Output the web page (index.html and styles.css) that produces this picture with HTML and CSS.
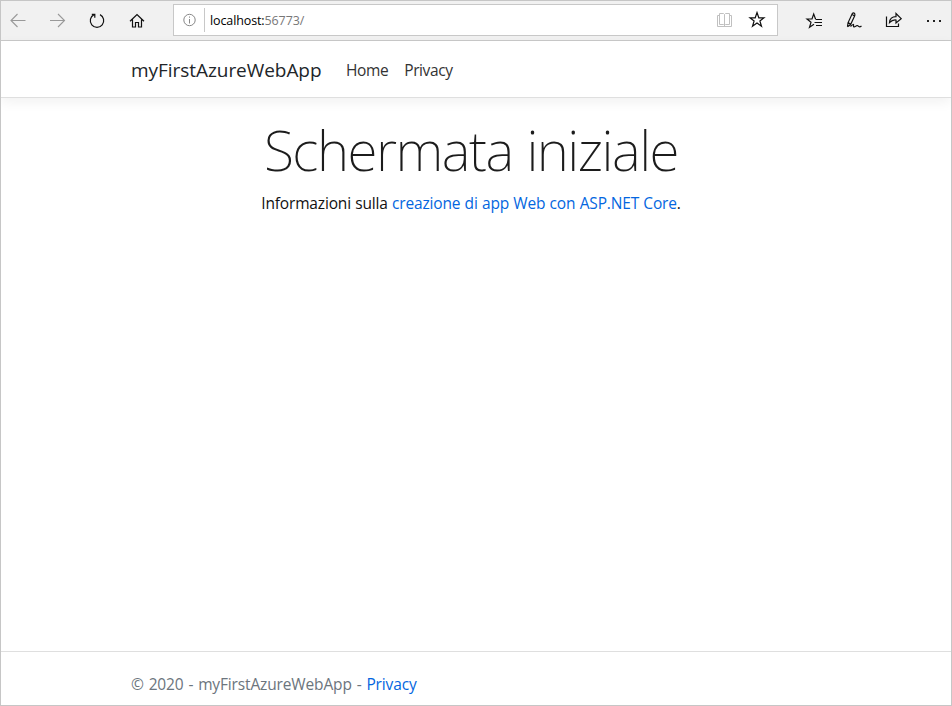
FILE: index.html
```html
<!DOCTYPE html>
<html lang="it">
<head>
<meta charset="utf-8">
<title>Home - myFirstAzureWebApp</title>
<link rel="stylesheet" href="styles.css">
</head>
<body>
<div class="window">
  <div class="toolbar">
    <div class="nav-buttons">
      <svg class="icon dim" viewBox="0 0 20 20"><path d="M18.500 10.500H4M10.500 4L4 10.500L10.500 17"/></svg>
      <svg class="icon dim" viewBox="0 0 20 20"><path d="M3 10.500H17.500M11 4L17.500 10.500L11 17"/></svg>
      <svg class="icon" viewBox="0 0 20 20"><path d="M7 4.600A6.700 6.700 0 1 0 13 4.600M4.800 4.400H7.800V7.800"/></svg>
      <svg class="icon" viewBox="0 0 20 20"><path d="M3 11.300L10 4.500L17 11.300M5.500 9.500V17H8.500V12.500H11.500V17H14.500V9.500"/></svg>
    </div>
    <div class="address">
      <svg class="icon info" viewBox="0 0 20 20"><circle cx="10.500" cy="11" r="5.700"/><path d="M10.500 10V14.500M10.500 7.500V8.700"/></svg>
      <span class="separator"></span>
      <span class="url">localhost:<span class="port">56773/</span></span>
      <svg class="icon book" viewBox="0 0 20 20"><path d="M10.500 5.500V17M10.500 5.500L9.500 4.500H5.500V15.500H9.500L10.500 16.500L11.500 15.500H15.500V4.500H11.500L10.500 5.500M5.500 6.500H3.500V17.500H17.500V6.500H15.500"/></svg>
      <svg class="icon star" viewBox="0 0 20 20"><path d="M10 3.500L11.800 8.800H17L12.900 12L14.500 17.300L10 14.100L5.500 17.300L7.100 12L3 8.800H8.200Z"/></svg>
    </div>
    <div class="actions">
      <svg class="icon" viewBox="0 0 20 20"><path d="M12 8.500H11.300L9.700 4L8 9H3L7 12.300L5.500 17.300L10 14.200"/><path d="M11.500 9.500H18M10.500 12.500H18M12 15.500H18"/></svg>
      <svg class="icon" viewBox="0 0 20 20"><path d="M3.500 16.800L4 12.800L8.200 3.700Q9.500 2 10.700 3.700Q11.200 4.800 10.600 6L6.500 14.800L3.500 16.800M4.300 12.500L6.500 14.500M8 4.500L10.300 5.800"/><path d="M6.500 16.500C9 14 10 14 9.500 15.500C9.200 17.500 11 17 12.500 15.800Q13.500 15 14.200 16.200Q15.500 17.500 17.500 16"/></svg>
      <svg class="icon" viewBox="0 0 20 20"><path d="M2.500 6.500V16.500H14.500V13.500"/><path d="M5.500 12.700Q6 6.700 12 6.700V3.500L17.200 8.600L12 13V10Q8.500 9.500 5.500 12.700Z"/></svg>
      <svg class="icon dots" viewBox="0 0 20 20"><path d="M3 10h2v2H3zM9 10h2v2H9zM15 10h2v2h-2z"/></svg>
    </div>
  </div>
  <header class="navbar">
    <a class="brand">myFirstAzureWebApp</a>
    <nav class="links"><a class="home">Home</a><a class="privacy">Privacy</a></nav>
  </header>
  <main class="content">
    <h1 class="title">Schermata iniziale</h1>
    <p class="lead">Informazioni sulla <a class="link">creazione di app Web con ASP.NET Core</a>.</p>
  </main>
  <footer class="footer"><span class="copyright">© 2020 - myFirstAzureWebApp - <a class="link">Privacy</a></span></footer>
</div>
</body>
</html>
```
FILE: styles.css
```css
* { box-sizing: border-box; }
body { margin: 0; font-family: "Open Sans", "Noto Sans", sans-serif; font-size: 15.5px; color: #212529; }
.window { width: 952px; height: 706px; border: 1px solid #c6c6c6; display: flex; flex-direction: column; background: #fff; overflow: hidden; }
.toolbar { height: 40px; flex: none; background: #f1f1f1; border-bottom: 1px solid #c9c9c9; display: flex; align-items: flex-start; }
.icon { width: 20px; height: 20px; flex: none; fill: none; stroke: #111; stroke-width: 1.2; }
.dim { stroke: #999; stroke-width: 1.1; }
.nav-buttons { display: flex; gap: 20px; width: 172px; padding: 9px 0 0 6px; }
.address { width: 605px; height: 32px; margin-top: 3px; border: 1px solid #c8c8c8; background: #fff; display: flex; align-items: center; padding: 0 10px 0 5px; }
.address .icon { margin-bottom: 2px; }
.info { stroke: #888; stroke-width: 1; }
.separator { width: 1px; height: 24px; background: #c8c8c8; margin: 0 5px; }
.url { font-size: 12.5px; line-height: 20px; padding-top: 2px; color: #000; letter-spacing: -0.11px; flex: 1; }
.port { color: #777; }
.address .book { stroke: #c0c0c0; stroke-width: 1; margin-right: 13px; }
.actions { display: flex; gap: 20px; padding: 9px 0 0 26px; }
.dots { fill: #222; stroke: none; }
.navbar { height: 57px; flex: none; display: flex; align-items: center; padding: 1px 0 0 130px; border-bottom: 1px solid #dfdfdf; box-shadow: 0 4px 12px rgba(0,0,0,.06); }
.brand { width: 215px; font-size: 19px; line-height: 30px; letter-spacing: -0.05px; }
.links { display: flex; gap: 16px; padding-top: 1px; color: #333; line-height: 24px; letter-spacing: -0.4px; }
.content { flex: 1; text-align: center; padding: 18px 10px 0 0; }
.title { margin: 0; font-family: "Noto Sans", "Open Sans", sans-serif; font-size: 55px; font-weight: 200; line-height: 68px; letter-spacing: -1.5px; word-spacing: 1px; color: #1c1c1c; }
.lead { margin: 7px 0 0; line-height: 24px; letter-spacing: -0.16px; word-spacing: 0.4px; color: #111; }
.link { color: #0366e0; }
.footer { height: 54px; flex: none; border-top: 1px solid #dfdfdf; padding: 20px 0 0 130px; line-height: 24px; letter-spacing: -0.14px; word-spacing: 1px; color: #6c757d; }
```
